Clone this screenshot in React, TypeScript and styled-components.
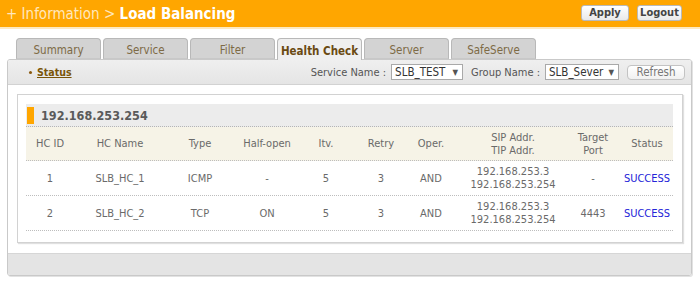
import * as React from 'react';
import styled, { createGlobalStyle } from 'styled-components';

const GlobalStyle = createGlobalStyle`
  html, body {
    margin: 0;
    padding: 0;
    background: #ffffff;
  }
  body {
    font-family: "DejaVu Sans Condensed", "DejaVu Sans", sans-serif;
    font-size: 11px;
    color: #666;
  }
`;

const Page = styled.div`
  width: 700px;
  height: 283px;
  overflow: hidden;
`;

const Header = styled.div`
  height: 27px;
  background: #ffa600;
  border-bottom: 2px solid #fde9c0;
  display: flex;
  align-items: center;
  justify-content: space-between;
  padding: 0 18px 0 6px;
`;

const Title = styled.div`
  font-size: 15px;
  color: #ffe7bd;
  white-space: nowrap;

  b {
    color: #ffffff;
    font-weight: bold;
  }
`;

const HeaderButtons = styled.div`
  display: flex;
  gap: 8px;
  align-self: flex-start;
  margin-top: 5px;
`;

const HeaderButton = styled.button<{ w: number }>`
  width: ${(p) => p.w}px;
  height: 16px;
  padding: 0;
  border: 1px solid #b9b9b9;
  border-radius: 3px;
  background: linear-gradient(#ffffff, #e9e9e9);
  font-family: inherit;
  font-size: 11px;
  font-weight: bold;
  color: #444;
  line-height: 14px;
`;

const Content = styled.div`
  padding: 0 8px 0 7px;
`;

const TabRow = styled.div`
  display: flex;
  gap: 2px;
  padding-left: 9px;
  margin-top: 9px;
  height: 21px;
  position: relative;
  z-index: 1;
`;

const Tab = styled.div<{ active?: boolean }>`
  width: 85px;
  box-sizing: border-box;
  border: 1px solid #b8b8b8;
  border-bottom: ${(p) => (p.active ? 'none' : '1px solid #c8c8c8')};
  border-radius: 4px 4px 0 0;
  background: ${(p) => (p.active ? '#efefef' : '#d3d3d3')};
  color: ${(p) => (p.active ? '#6a4a12' : '#7d6a45')};
  font-weight: ${(p) => (p.active ? 'bold' : 'normal')};
  font-size: 11.5px;
  display: flex;
  align-items: center;
  justify-content: center;
  padding-top: 3px;
  height: ${(p) => (p.active ? '22px' : '21px')};
`;

const Panel = styled.div`
  border: 1px solid #c9c9c9;
  border-radius: 3px;
  box-shadow: 1px 1px 0 #e2e2e2;
  display: flex;
  flex-direction: column;
  overflow: hidden;
`;

const Toolbar = styled.div`
  height: 24px;
  flex: none;
  background: linear-gradient(#efefef, #e5e5e5);
  border-bottom: 1px solid #d2d2d2;
  display: flex;
  align-items: center;
  padding: 0 6px 0 21px;
`;

const StatusLink = styled.a`
  color: #7a5508;
  font-weight: bold;
  font-size: 10.5px;
  text-decoration: underline;
  display: flex;
  align-items: center;
  gap: 5px;

  &::before {
    content: '';
    width: 3px;
    height: 3px;
    border-radius: 50%;
    background: #8a5a10;
  }
`;

const Controls = styled.div`
  margin-left: auto;
  display: flex;
  align-items: center;
  color: #555;
  font-size: 11px;
`;

const Label = styled.span`
  margin-right: 5px;
`;

const Select = styled.div<{ w: number }>`
  width: ${(p) => p.w}px;
  height: 16px;
  box-sizing: border-box;
  border: 1px solid #a9a9a9;
  background: #fff;
  color: #333;
  font-size: 11.5px;
  display: flex;
  align-items: center;
  justify-content: space-between;
  padding: 0 4px 0 3px;
  margin-right: 8px;

  span {
    font-size: 8px;
    color: #555;
  }
`;

const RefreshButton = styled.button`
  width: 58px;
  height: 15px;
  padding: 0;
  border: 1px solid #c3c3c3;
  border-radius: 4px;
  background: linear-gradient(#ffffff, #f1f1f1);
  font-family: inherit;
  font-size: 11.5px;
  color: #777;
  line-height: 13px;
`;

const Body = styled.div`
  padding: 9px 8px 10px 9px;
  background: #fff;
`;

const Box = styled.div`
  border: 1px solid #d2d2d2;
  box-shadow: 1px 1px 1px #e0e0e0;
  padding: 9px 9px 11px 8px;
`;

const AddrBar = styled.div`
  height: 22px;
  background: #ececec;
  border-bottom: 1px dotted #b5b5b5;
  display: flex;
  align-items: center;
  gap: 7px;
  padding-left: 1px;
  font-size: 12.5px;
  font-weight: bold;
  color: #5a5a5a;

  &::before {
    content: '';
    width: 7px;
    height: 17px;
    background: #ffa600;
  }
`;

const Row = styled.div<{ head?: boolean }>`
  display: grid;
  grid-template-columns: 48px 92px 68px 66px 52px 58px 42px 122px 38px 1fr;
  height: ${(p) => (p.head ? '33px' : '34px')};
  background: ${(p) => (p.head ? '#f6f3e7' : 'transparent')};
  border-bottom: 1px dotted #bdbdbd;
  color: #6a6a6a;
  font-size: 11px;
  line-height: 13px;
`;

const Cell = styled.div<{ shift?: number }>`
  display: flex;
  flex-direction: column;
  align-items: center;
  justify-content: center;
  text-align: center;
  padding-left: ${(p) => p.shift ?? 0}px;
  white-space: nowrap;
`;

const Success = styled.span`
  color: #2424d8;
`;

const Footer = styled.div`
  height: 21px;
  flex: none;
  background: #e4e4e4;
  border-top: 1px solid #d6d6d6;
`;

interface Check {
  id: number;
  name: string;
  type: string;
  halfOpen: string;
  itv: number;
  retry: number;
  oper: string;
  sip: string;
  tip: string;
  port: string;
  status: string;
}

const checks: Check[] = [
  { id: 1, name: 'SLB_HC_1', type: 'ICMP', halfOpen: '-', itv: 5, retry: 3, oper: 'AND', sip: '192.168.253.3', tip: '192.168.253.254', port: '-', status: 'SUCCESS' },
  { id: 2, name: 'SLB_HC_2', type: 'TCP', halfOpen: 'ON', itv: 5, retry: 3, oper: 'AND', sip: '192.168.253.3', tip: '192.168.253.254', port: '4443', status: 'SUCCESS' },
];

const tabs = ['Summary', 'Service', 'Filter', 'Health Check', 'Server', 'SafeServe'];

export default function App(): JSX.Element {
  return (
    <Page>
      <GlobalStyle />
      <Header>
        <Title>
          + Information &gt; <b>Load Balancing</b>
        </Title>
        <HeaderButtons>
          <HeaderButton w={48}>Apply</HeaderButton>
          <HeaderButton w={45}>Logout</HeaderButton>
        </HeaderButtons>
      </Header>
      <Content>
        <TabRow>
          {tabs.map((t) => (
            <Tab key={t} active={t === 'Health Check'}>{t}</Tab>
          ))}
        </TabRow>
        <Panel>
          <Toolbar>
            <StatusLink>Status</StatusLink>
            <Controls>
              <Label>Service Name :</Label>
              <Select w={72}>SLB_TEST <span>▼</span></Select>
              <Label>Group Name :</Label>
              <Select w={74}>SLB_Sever <span>▼</span></Select>
              <RefreshButton>Refresh</RefreshButton>
            </Controls>
          </Toolbar>
          <Body>
            <Box>
              <AddrBar>192.168.253.254</AddrBar>
              <Row head>
                <Cell>HC ID</Cell>
                <Cell>HC Name</Cell>
                <Cell>Type</Cell>
                <Cell>Half-open</Cell>
                <Cell>Itv.</Cell>
                <Cell>Retry</Cell>
                <Cell>Oper.</Cell>
                <Cell><span>SIP Addr.</span><span>TIP Addr.</span></Cell>
                <Cell><span>Target</span><span>Port</span></Cell>
                <Cell shift={9}>Status</Cell>
              </Row>
              {checks.map((c) => (
                <Row key={c.id}>
                  <Cell>{c.id}</Cell>
                  <Cell>{c.name}</Cell>
                  <Cell>{c.type}</Cell>
                  <Cell>{c.halfOpen}</Cell>
                  <Cell>{c.itv}</Cell>
                  <Cell>{c.retry}</Cell>
                  <Cell>{c.oper}</Cell>
                  <Cell><span>{c.sip}</span><span>{c.tip}</span></Cell>
                  <Cell>{c.port}</Cell>
                  <Cell shift={9}><Success>{c.status}</Success></Cell>
                </Row>
              ))}
            </Box>
          </Body>
          <Footer />
        </Panel>
      </Content>
    </Page>
  );
}
